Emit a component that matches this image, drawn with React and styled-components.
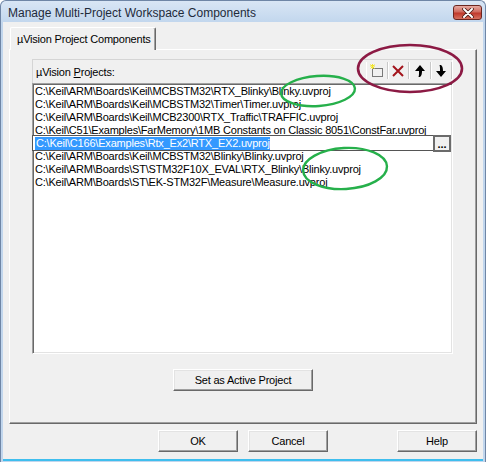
import styled, { createGlobalStyle } from 'styled-components';

const GlobalStyle = createGlobalStyle`
  html, body { margin: 0; padding: 0; background: #fff; }
  * { box-sizing: border-box; }
`;

const Window = styled.div`
  position: relative;
  width: 486px;
  height: 462px;
  display: flex;
  flex-direction: column;
  background: linear-gradient(#d9e6f5 0, #c1d6ed 22px, #c1d6ed 100%);
  border: 1px solid #6f86a6;
  border-bottom: none;
  border-radius: 6px 6px 0 0;
  font-family: "Liberation Sans", Arial, sans-serif;
  font-size: 11px;
  letter-spacing: -0.2px;
  color: #000;
  overflow: hidden;
`;

const TitleBar = styled.div`
  height: 21px;
  display: flex;
  align-items: flex-start;
  justify-content: space-between;
  padding: 0 3px 0 7px;
`;

const Title = styled.span`
  font-size: 12px;
  letter-spacing: 0;
  line-height: 14px;
  margin-top: 5px;
  color: #1e2a3a;
`;

const CloseButton = styled.div`
  width: 29px;
  height: 15px;
  margin-top: 4px;
  display: flex;
  align-items: center;
  justify-content: center;
  border: 1px solid #6b2620;
  border-radius: 3px;
  background: linear-gradient(#e6aaa2 0%, #d06a5e 45%, #c0392c 55%, #d6705f 100%);
`;

const Client = styled.div`
  flex: 1;
  margin: 0 2px 1px;
  display: flex;
  flex-direction: column;
  padding: 5px 6px 0 6px;
  background: #f0f0f0;
  border-bottom: 2px solid #3fbeee;
`;

const TabStrip = styled.div`
  height: 22px;
  display: flex;
  padding-left: 1px;
`;

const Tab = styled.div`
  position: relative;
  z-index: 1;
  width: 146px;
  height: 23px;
  padding: 4px 0 0 6px;
  line-height: 14px;
  white-space: nowrap;
  background: #f0f0f0;
  border-top: 1px solid #fff;
  border-left: 1px solid #fff;
  border-right: 1px solid #696969;
  box-shadow: inset -1px 0 0 #a0a0a0;
  border-radius: 2px 2px 0 0;
`;

const TabPanel = styled.div`
  height: 375px;
  display: flex;
  flex-direction: column;
  padding: 9px 0 0 22px;
  border-top: 1px solid #fff;
  border-left: 1px solid #fff;
  border-right: 1px solid #696969;
  border-bottom: 1px solid #696969;
  box-shadow: inset -1px -1px 0 #a0a0a0;
`;

const ListHeader = styled.div`
  width: 421px;
  height: 24px;
  display: flex;
  align-items: flex-start;
  justify-content: space-between;
  padding: 2px 0 0 3px;
  border-top: 1px solid #d5d5d5;
  border-left: 1px solid #d5d5d5;
  border-right: 1px solid #fff;
`;

const Label = styled.span`
  line-height: 14px;
  margin-top: 3px;
`;

const Toolbar = styled.div`
  display: flex;
`;

const ToolButton = styled.div`
  width: 21.5px;
  height: 17px;
  display: flex;
  align-items: center;
  justify-content: center;
  border-left: 1px solid #fff;
  border-right: 1px solid #c8c8c8;
`;

const ListBox = styled.div`
  width: 421px;
  height: 271px;
  padding: 1px 0 0 2px;
  background: #fff;
  border-top: 1px solid #a0a0a0;
  border-left: 1px solid #a0a0a0;
  border-right: 1px solid #fff;
  border-bottom: 1px solid #fff;
  box-shadow: inset 1px 1px 0 #696969, inset -1px -1px 0 #e3e3e3;
`;

const Row = styled.div`
  height: 13px;
  line-height: 13px;
  white-space: nowrap;
`;

const EditRow = styled.div`
  height: 13px;
  display: flex;
  align-items: center;
  margin-left: -3px;
`;

const EditField = styled.div`
  width: 401px;
  height: 16px;
  margin-top: -1px;
  padding: 1px 0 0 2px;
  border: 1px solid #555;
  border-right: none;
  background: #fff;
  white-space: nowrap;
`;

const Selection = styled.span`
  display: inline-block;
  line-height: 13px;
  padding-left: 1px;
  background: #3399ff;
  color: #fff;
`;

const BrowseButton = styled.div`
  width: 18px;
  height: 17px;
  margin-top: -1px;
  display: flex;
  align-items: flex-end;
  justify-content: center;
  padding-bottom: 2px;
  font-weight: bold;
  letter-spacing: 0;
  line-height: 8px;
  background: #f0f0f0;
  border: 2px solid #6b6b6b;
`;

const PushButton = styled.div`
  width: ${p => p.$width || 80}px;
  height: 22px;
  display: flex;
  align-items: center;
  justify-content: center;
  background: #f0f0f0;
  border-top: 1px solid #fff;
  border-left: 1px solid #fff;
  border-right: 1px solid #696969;
  border-bottom: 1px solid #696969;
  box-shadow: inset -1px -1px 0 #a0a0a0, inset 1px 1px 0 #e3e3e3;
  margin-left: ${p => p.$offset || 0}px;
`;

const CenterButtonRow = styled.div`
  display: flex;
  justify-content: center;
  margin: 15px 0 0 -22px;
`;

const ButtonRow = styled.div`
  display: flex;
  justify-content: flex-end;
  gap: 10px;
  margin-top: 6px;
`;

const Annotations = styled.svg`
  position: absolute;
  top: -1px;
  left: -1px;
  pointer-events: none;
`;

const projects = [
  'C:\\Keil\\ARM\\Boards\\Keil\\MCBSTM32\\RTX_Blinky\\Blinky.uvproj',
  'C:\\Keil\\ARM\\Boards\\Keil\\MCBSTM32\\Timer\\Timer.uvproj',
  'C:\\Keil\\ARM\\Boards\\Keil\\MCB2300\\RTX_Traffic\\TRAFFIC.uvproj',
  'C:\\Keil\\C51\\Examples\\FarMemory\\1MB Constants on Classic 8051\\ConstFar.uvproj',
  'C:\\Keil\\C166\\Examples\\Rtx_Ex2\\RTX_EX2.uvproj',
  'C:\\Keil\\ARM\\Boards\\Keil\\MCBSTM32\\Blinky\\Blinky.uvproj',
  'C:\\Keil\\ARM\\Boards\\ST\\STM32F10X_EVAL\\RTX_Blinky\\Blinky.uvproj',
  'C:\\Keil\\ARM\\Boards\\ST\\EK-STM32F\\Measure\\Measure.uvproj',
];
const editing = 4;

const NewIcon = () => (
  <svg width="16" height="14" viewBox="0 0 16 14">
    <rect x="3.5" y="4.5" width="10" height="8" fill="none" stroke="#000" strokeDasharray="1 1" />
    <path d="M1 2h5M3.5 0v5M1.5 0.5l4 4M5.5 0.5l-4 4" stroke="#f2e52a" strokeWidth="1" />
  </svg>
);

const DeleteIcon = () => (
  <svg width="12" height="12" viewBox="0 0 12 12">
    <path d="M1 1L11 11M11 1L1 11" stroke="#a3141c" strokeWidth="2" />
  </svg>
);

const UpIcon = () => (
  <svg width="10" height="12" viewBox="0 0 10 12">
    <path d="M5 0L10 6H7C7 9 6.5 11 5 12H3.5C4.2 10 4 8 4 6H0Z" fill="#000" />
  </svg>
);

const DownIcon = () => (
  <svg width="10" height="12" viewBox="0 0 10 12">
    <path d="M5 12L10 6H7C7 3 6.5 1 5 0H3.5C4.2 2 4 4 4 6H0Z" fill="#000" />
  </svg>
);

export default function App() {
  return (
    <>
      <GlobalStyle />
      <Window>
        <TitleBar>
          <Title>Manage Multi-Project Workspace Components</Title>
          <CloseButton>
            <svg width="12" height="10" viewBox="0 0 12 10">
              <path d="M2 1L10 9M10 1L2 9" stroke="#4a1a16" strokeWidth="3.6" strokeLinecap="round" />
              <path d="M2 1L10 9M10 1L2 9" stroke="#fff" strokeWidth="2" strokeLinecap="round" />
            </svg>
          </CloseButton>
        </TitleBar>
        <Client>
          <TabStrip>
            <Tab>µVision Project Components</Tab>
          </TabStrip>
          <TabPanel>
            <ListHeader>
              <Label>µVision <u>P</u>rojects:</Label>
              <Toolbar>
                <ToolButton><NewIcon /></ToolButton>
                <ToolButton><DeleteIcon /></ToolButton>
                <ToolButton><UpIcon /></ToolButton>
                <ToolButton><DownIcon /></ToolButton>
              </Toolbar>
            </ListHeader>
            <ListBox>
              {projects.map((p, i) =>
                i === editing ? (
                  <EditRow key={p}>
                    <EditField><Selection>{p}</Selection></EditField>
                    <BrowseButton>...</BrowseButton>
                  </EditRow>
                ) : (
                  <Row key={p}>{p}</Row>
                )
              )}
            </ListBox>
            <CenterButtonRow>
              <PushButton $width={140}>Set as Active Project</PushButton>
            </CenterButtonRow>
          </TabPanel>
          <ButtonRow>
            <PushButton>OK</PushButton>
            <PushButton>Cancel</PushButton>
            <PushButton $offset={59}>Help</PushButton>
          </ButtonRow>
        </Client>
        <Annotations width="486" height="462" viewBox="0 0 486 462">
          <ellipse cx="410" cy="68.5" rx="52" ry="23.5" fill="none" stroke="#8c1a44" strokeWidth="2.6" />
          <ellipse cx="318" cy="91" rx="37" ry="15" fill="none" stroke="#26b04b" strokeWidth="2.4" transform="rotate(-4 318 91)" />
          <ellipse cx="345" cy="168.5" rx="42" ry="20.5" fill="none" stroke="#26b04b" strokeWidth="2.4" transform="rotate(-3 345 168)" />
        </Annotations>
      </Window>
    </>
  );
}
